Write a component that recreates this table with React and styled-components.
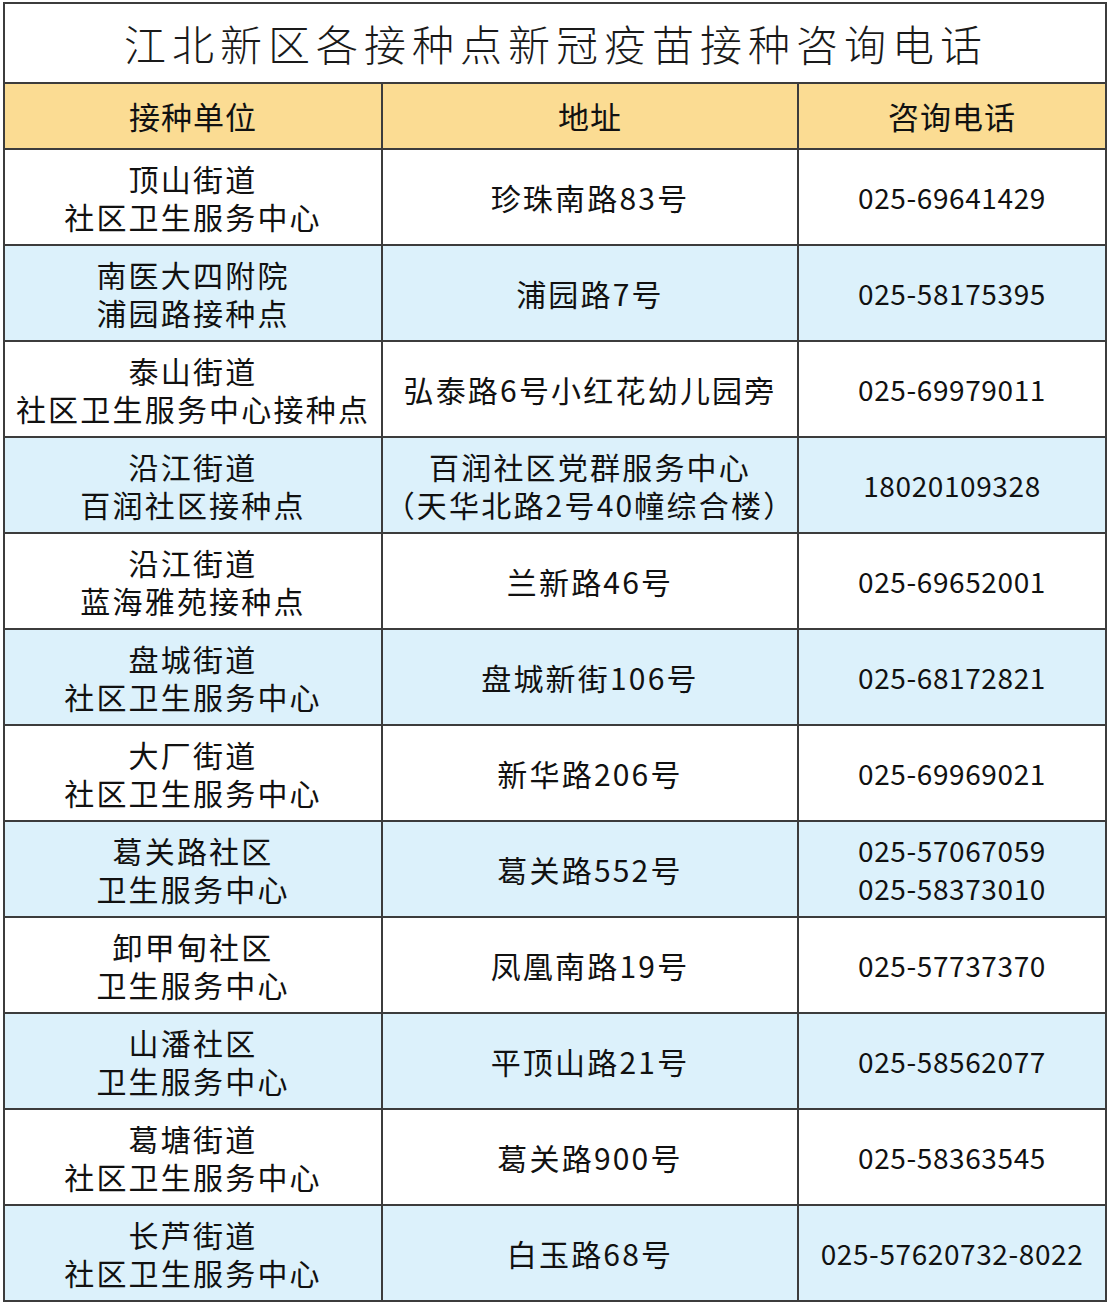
import React from "react";
import styled, { createGlobalStyle } from "styled-components";

const GlobalStyle = createGlobalStyle`
  html, body {
    margin: 0;
    padding: 0;
    background: #fff;
  }
  body {
    font-family: "Noto Sans CJK SC", "Noto Sans", sans-serif;
    color: #111;
  }
`;

const rows = [
  { unit: ["顶山街道", "社区卫生服务中心"], addr: ["珍珠南路83号"], tel: ["025-69641429"] },
  { unit: ["南医大四附院", "浦园路接种点"], addr: ["浦园路7号"], tel: ["025-58175395"] },
  { unit: ["泰山街道", "社区卫生服务中心接种点"], addr: ["弘泰路6号小红花幼儿园旁"], tel: ["025-69979011"] },
  {
    unit: ["沿江街道", "百润社区接种点"],
    addr: ["百润社区党群服务中心", "（天华北路2号40幢综合楼）"],
    tel: ["18020109328"],
  },
  { unit: ["沿江街道", "蓝海雅苑接种点"], addr: ["兰新路46号"], tel: ["025-69652001"] },
  { unit: ["盘城街道", "社区卫生服务中心"], addr: ["盘城新街106号"], tel: ["025-68172821"] },
  { unit: ["大厂街道", "社区卫生服务中心"], addr: ["新华路206号"], tel: ["025-69969021"] },
  { unit: ["葛关路社区", "卫生服务中心"], addr: ["葛关路552号"], tel: ["025-57067059", "025-58373010"] },
  { unit: ["卸甲甸社区", "卫生服务中心"], addr: ["凤凰南路19号"], tel: ["025-57737370"] },
  { unit: ["山潘社区", "卫生服务中心"], addr: ["平顶山路21号"], tel: ["025-58562077"] },
  { unit: ["葛塘街道", "社区卫生服务中心"], addr: ["葛关路900号"], tel: ["025-58363545"] },
  { unit: ["长芦街道", "社区卫生服务中心"], addr: ["白玉路68号"], tel: ["025-57620732-8022"] },
];

const Page = styled.div`
  padding: 2px 2px 0 3px;
  width: 1108px;
  box-sizing: border-box;
`;

const Table = styled.table`
  width: 1102px;
  border-collapse: collapse;
  table-layout: fixed;
  border: 2px solid #3c3c3c;
`;

const TitleCell = styled.th`
  height: 74px;
  padding: 2px 0 2px 2px;
  font-size: 42px;
  font-weight: 300;
  letter-spacing: 6px;
  line-height: 1;
  color: #1a1a1a;
  text-align: center;
  background: #fff;
  border: 2px solid #3c3c3c;
  white-space: nowrap;
`;

const HeadCell = styled.th`
  height: 62px;
  padding: 0 0 2px 0;
  font-size: 31px;
  font-weight: 400;
  letter-spacing: 1px;
  color: #111;
  background: #fbdc93;
  border: 2px solid #3c3c3c;
  text-align: center;
`;

const Row = styled.tr`
  background: ${(p) => (p.$shaded ? "#dcf1fb" : "#fff")};
`;

const Cell = styled.td`
  height: 94px;
  padding: 0;
  text-align: center;
  vertical-align: middle;
  border: 2px solid #3c3c3c;
  font-size: ${(p) => (p.$phone ? "28px" : "30px")};
  letter-spacing: ${(p) => (p.$phone ? "0.6px" : "2.2px")};
  line-height: 38px;
  color: #111;
  white-space: nowrap;
`;

const Line = styled.div`
  height: 38px;
`;

function Lines({ items }) {
  return items.map((t, i) => <Line key={i}>{t}</Line>);
}

export default function App() {
  return (
    <Page>
      <GlobalStyle />
      <Table>
        <colgroup>
          <col style={{ width: 378 }} />
          <col style={{ width: 416 }} />
          <col style={{ width: 308 }} />
        </colgroup>
        <thead>
          <tr>
            <TitleCell colSpan={3}>江北新区各接种点新冠疫苗接种咨询电话</TitleCell>
          </tr>
          <tr>
            <HeadCell>接种单位</HeadCell>
            <HeadCell>地址</HeadCell>
            <HeadCell>咨询电话</HeadCell>
          </tr>
        </thead>
        <tbody>
          {rows.map((r, i) => (
            <Row key={i} $shaded={i % 2 === 1}>
              <Cell>
                <Lines items={r.unit} />
              </Cell>
              <Cell>
                <Lines items={r.addr} />
              </Cell>
              <Cell $phone>
                <Lines items={r.tel} />
              </Cell>
            </Row>
          ))}
        </tbody>
      </Table>
    </Page>
  );
}
